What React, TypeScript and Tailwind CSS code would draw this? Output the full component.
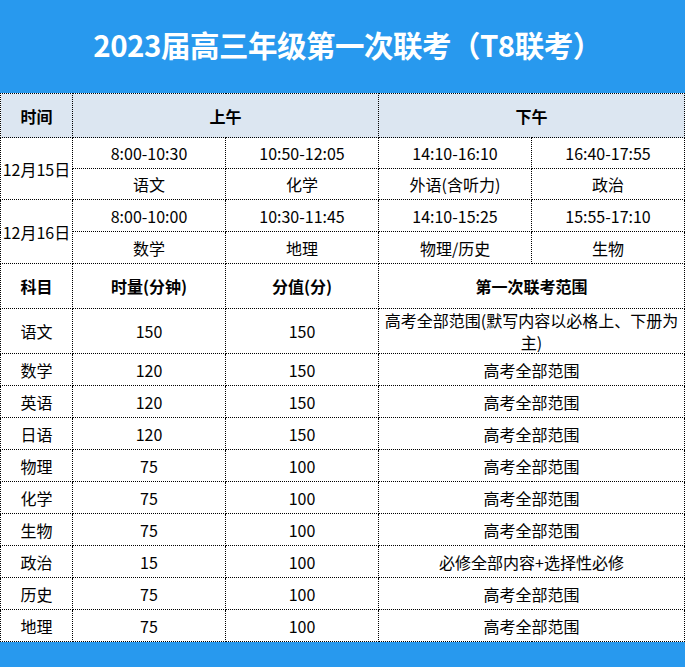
const schedule = [
  {
    date: "12月15日",
    times: ["8:00-10:30", "10:50-12:05", "14:10-16:10", "16:40-17:55"],
    subjects: ["语文", "化学", "外语(含听力)", "政治"],
  },
  {
    date: "12月16日",
    times: ["8:00-10:00", "10:30-11:45", "14:10-15:25", "15:55-17:10"],
    subjects: ["数学", "地理", "物理/历史", "生物"],
  },
];

const subjects = [
  ["数学", "120", "150", "高考全部范围"],
  ["英语", "120", "150", "高考全部范围"],
  ["日语", "120", "150", "高考全部范围"],
  ["物理", "75", "100", "高考全部范围"],
  ["化学", "75", "100", "高考全部范围"],
  ["生物", "75", "100", "高考全部范围"],
  ["政治", "15", "100", "必修全部内容+选择性必修"],
  ["历史", "75", "100", "高考全部范围"],
  ["地理", "75", "100", "高考全部范围"],
];

const cell = "border border-dotted border-black text-center align-middle p-0";

export default function App() {
  return (
    <div
      className="w-[685px] h-[667px] bg-[#2899ee] flex flex-col text-black"
      style={{ fontFamily: '"Noto Sans CJK SC", "Microsoft YaHei", sans-serif' }}
    >
      {/* Title */}
      <div className="h-[93px] flex items-center justify-center shrink-0 pl-[10px]">
        <h1 className="text-[29.5px] font-bold text-white tracking-[-0.5px] leading-none pb-1">
          2023届高三年级第一次联考（T8联考）
        </h1>
      </div>

      <div className="bg-white w-[685px]">
        <table className="table-fixed border-collapse w-[684px] text-[16px] leading-[22px]">
          <colgroup>
            <col className="w-[72px]" />
            <col className="w-[153px]" />
            <col className="w-[153px]" />
            <col className="w-[153px]" />
            <col className="w-[153px]" />
          </colgroup>
          <tbody>
            <tr className="h-[44px] bg-[#dce6f1] font-bold">
              <td className={cell}>时间</td>
              <td className={cell} colSpan={2}>上午</td>
              <td className={cell} colSpan={2}>下午</td>
            </tr>

            {schedule.map((day, i) => (
              <>
                <tr key={day.date + "t"} className={i === 0 ? "h-[31px]" : "h-[32px]"}>
                  <td className={cell} rowSpan={2}>{day.date}</td>
                  {day.times.map((t) => (
                    <td key={t} className={cell}>{t}</td>
                  ))}
                </tr>
                <tr key={day.date + "s"} className={i === 0 ? "h-[31px]" : "h-[32px]"}>
                  {day.subjects.map((s) => (
                    <td key={s} className={cell}>{s}</td>
                  ))}
                </tr>
              </>
            ))}

            <tr className="h-[45px] font-bold">
              <td className={cell}>科目</td>
              <td className={cell}>时量(分钟)</td>
              <td className={cell}>分值(分)</td>
              <td className={cell} colSpan={2}>第一次联考范围</td>
            </tr>

            <tr className="h-[45px]">
              <td className={cell}>语文</td>
              <td className={cell}>150</td>
              <td className={cell}>150</td>
              <td className={cell + " leading-[22px]"} colSpan={2}>
                高考全部范围(默写内容以必格上、下册为主)
              </td>
            </tr>

            {subjects.map((row) => (
              <tr key={row[0]} className="h-[32px]">
                {row.slice(0, 3).map((v, j) => (
                  <td key={j} className={cell}>{v}</td>
                ))}
                <td className={cell} colSpan={2}>{row[3]}</td>
              </tr>
            ))}
          </tbody>
        </table>
      </div>
    </div>
  );
}
